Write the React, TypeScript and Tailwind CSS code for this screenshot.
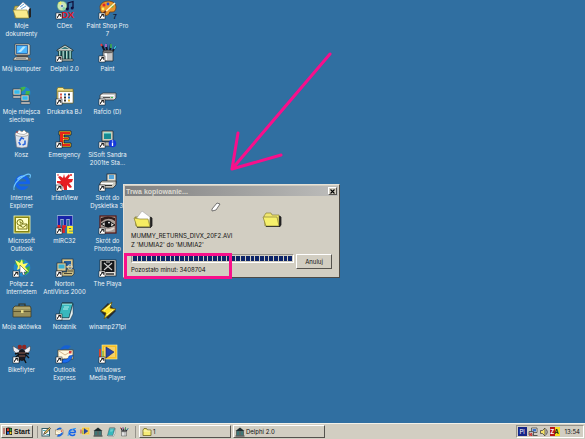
import React from "react";

type IconProps = { children: React.ReactNode; shortcut?: boolean };

function Art({ children, shortcut }: IconProps) {
  return (
    <svg viewBox="0 0 20 20" className="h-5 w-5 shrink-0" aria-hidden="true">
      {children}
      {shortcut && (
        <g>
          <rect x="1" y="13" width="6" height="6" fill="#fff" stroke="#111" strokeWidth="0.5" />
          <path d="M2.4 17.8 Q2.6 15.4 4.6 15.2 M3.4 14.4 H5.8 V16.8" fill="none" stroke="#000" strokeWidth="1" />
        </g>
      )}
    </svg>
  );
}

const Folder = () => (
  <>
    <path d="M2 8 L3 6 H8 L9 8 H16 V18 H3 Z" fill="#c9b95a" stroke="#77702c" strokeWidth="0.6" />
    <path d="M4 9 L11 2 L18 8 L14 14 L5 14 Z" fill="#fff" stroke="#778" strokeWidth="0.5" />
    <path d="M8 7 L12 4 M9 9 L14 6" stroke="#5a9ad0" strokeWidth="0.9" />
    <path d="M1 10 H15 L17 18 H4 Z" fill="#f8ea8c" stroke="#8c8030" strokeWidth="0.6" />
    <path d="M17 9 L19 8 V17 L17 18 Z" fill="#222" />
  </>
);

const Computer = () => (
  <>
    <path d="M3 1 H17 L18 2 V12 H3 Z" fill="#d8d4c4" stroke="#333" strokeWidth="0.6" />
    <rect x="4.5" y="2.5" width="11" height="8" fill="#49b6ff" stroke="#124a90" strokeWidth="0.7" />
    <path d="M6 9 L11 3.5 H14 L9 9 Z" fill="#b4e6ff" />
    <rect x="5" y="12" width="11" height="2" fill="#555" />
    <path d="M3 14 H16 L18 17 H1 Z" fill="#ddd8c8" stroke="#333" strokeWidth="0.6" />
    <path d="M4 15.5 H14" stroke="#888" strokeWidth="0.8" />
    <rect x="16" y="15" width="3" height="3" fill="#666" />
  </>
);

const Network = () => (
  <>
    <circle cx="12" cy="7" r="6.5" fill="#2184c8" />
    <path d="M7 3 Q10 0 14 1 L12 4 L9 6 L6 6 Z M14 5 L18 5 L17 10 L13 10 Z" fill="#43b54a" />
    <rect x="1" y="3" width="8" height="6" fill="#d8d8cc" stroke="#333" strokeWidth="0.6" />
    <rect x="2.3" y="4.2" width="5.4" height="3.6" fill="#35b9ed" />
    <rect x="1" y="10" width="8" height="2" fill="#ccc" stroke="#333" strokeWidth="0.4" />
    <rect x="9" y="9" width="8" height="6" fill="#d8d8cc" stroke="#333" strokeWidth="0.6" />
    <rect x="10.3" y="10.2" width="5.4" height="3.6" fill="#35b9ed" />
    <rect x="9" y="16" width="9" height="2" fill="#ccc" stroke="#333" strokeWidth="0.4" />
  </>
);

const Bin = () => (
  <>
    <path d="M3 5 H17 L15.5 18 Q10 20 4.5 18 Z" fill="#dbe3ec" stroke="#667" strokeWidth="0.6" />
    <ellipse cx="10" cy="5" rx="7" ry="2.4" fill="#f6f6f6" stroke="#777" strokeWidth="0.6" />
    <path d="M5 4 L7 1 L10 3 L12 1 L15 4 L12 5.5 L8 5 Z" fill="#fff" stroke="#888" strokeWidth="0.6" />
    <path d="M7.5 12 L9.5 8.8 L12 10 M13 11.5 L13 15 L10.5 16 M8.5 16 L6.8 13" fill="none" stroke="#2b66dc" strokeWidth="1.6" />
    <circle cx="5" cy="3" r="0.8" fill="#c33" />
  </>
);

const Explorer = () => (
  <>
    <circle cx="10.2" cy="10.5" r="5.8" fill="none" stroke="#1463e8" strokeWidth="3.4" />
    <path d="M12 12 H19 V14.4 H12 Z" fill="#306fa1" />
    <path d="M5 10.8 H17.8" stroke="#1463e8" strokeWidth="2.6" />
    <path d="M5.4 7.4 Q8 3.6 12.5 4.2" fill="none" stroke="#79c4ff" strokeWidth="1.2" />
    <path d="M2 18 Q1 13 7 7.5 Q15 1 18 2.4 Q19 3.6 17.8 6" fill="none" stroke="#6cc6ff" strokeWidth="1.1" />
  </>
);

const Outlook = () => (
  <>
    <rect x="2" y="1" width="16" height="17" fill="#858513" stroke="#ffffb0" strokeWidth="0.8" />
    <rect x="4" y="3" width="12" height="13" fill="#ffffc4" />
    <circle cx="8" cy="7.5" r="3" fill="#ffffb0" stroke="#6d6d10" />
    <path d="M8 5.6 V7.6 H9.8" fill="none" stroke="#6d6d10" strokeWidth="0.8" />
    <path d="M8 9 H15 V14 H6 V11 M7 10 L11 12.5 L15 9.5" fill="#fff9a8" stroke="#6d6d10" strokeWidth="0.9" />
  </>
);

const Connect = () => (
  <>
    <circle cx="10" cy="10" r="8.4" fill="#2489cf" />
    <path d="M3 5 Q8 0 13 3 L10 6 L11 9 L6 9 Z M13 10 L18 8 L17 14 L13 17 Z" fill="#41b03f" />
    <path d="M3 2 L8 5 L10 1 L11 6 L16 5 L13 9 L17 14 L9 10 L5 12 L6 8 Z" fill="#ffff67" />
    <path d="M8 7 L15 14 L12 14 L13 17 L11 17 L10 14 L8 15 Z" fill="#fff" stroke="#333" strokeWidth="0.5" />
  </>
);

const Briefcase = () => (
  <>
    <path d="M7 6 V3 H13 V6" fill="none" stroke="#39351e" strokeWidth="1.2" />
    <path d="M1 7 L3 5 H18 L19 7 V16 H1 Z" fill="#99905a" stroke="#37341f" strokeWidth="0.7" />
    <path d="M1 10.5 H19" stroke="#5b552f" />
    <path d="M2 7 H18" stroke="#c8bf84" />
    <rect x="9" y="9" width="2.5" height="3" fill="#e7db85" />
  </>
);

const Fly = () => (
  <>
    <path d="M9 7 L1 2 Q0 7 5 10 Z M11 7 L18 2 Q20 7 14 10 Z" fill="#eeeef4" stroke="#333" strokeWidth="0.5" />
    <ellipse cx="10" cy="11" rx="4" ry="6" fill="#191920" />
    <circle cx="7.8" cy="3" r="2.2" fill="#8f2721" />
    <circle cx="12.2" cy="3" r="2.2" fill="#8f2721" />
    <path d="M7 10 L3 14 M13 10 L17 14 M8 15 L6 19 M12 15 L14 19 M6 9 L3 10 M14 9 L17 10" stroke="#111" strokeWidth="1.4" />
    <path d="M7 9 H13 M7 12 H13" stroke="#8d5c4d" />
  </>
);

const CDex = () => (
  <>
    <circle cx="7" cy="6" r="4.8" fill="#c9e7b4" stroke="#596" strokeWidth="0.5" />
    <path d="M7 6 L3 3 L6 1.3 Z" fill="#f4ec6a" />
    <path d="M7 6 L11 8 L8 10.7 Z" fill="#82d4ae" />
    <circle cx="7" cy="6" r="1.5" fill="#39699b" stroke="#fff" strokeWidth="0.6" />
    <path d="M13 9 V3 L18 1.5 V8" fill="none" stroke="#10103c" strokeWidth="1.3" />
    <circle cx="12.3" cy="9" r="1.5" fill="#10103c" />
    <circle cx="17.2" cy="8" r="1.5" fill="#10103c" />
    <text x="6.5" y="18" fill="#e01622" className="font-['Liberation_Sans'] text-[9px] font-bold">DX</text>
  </>
);

const Temple = () => (
  <>
    <path d="M2 7 L10 2 L18 7 V8 H2 Z" fill="#c9cfc9" stroke="#162828" strokeWidth="0.8" />
    <path d="M6 6 L10 3.8 L14 6 Z" fill="#36797a" />
    <rect x="3" y="8" width="14" height="8" fill="#123d42" />
    <path d="M4.8 8 V16 M8.5 8 V16 M12 8 V16 M15.4 8 V16" stroke="#61aaa0" strokeWidth="1.6" />
    <path d="M4.4 8 V16 M8 8 V16 M11.5 8 V16 M15 8 V16" stroke="#dff0e4" strokeWidth="0.7" />
    <path d="M2 16 H18 V18 H1 Z" fill="#afb7b2" stroke="#192929" strokeWidth="0.6" />
  </>
);

const SmallTemple = () => (
  <>
    <path d="M1 8 L10 1 L19 8 Z" fill="#1c2b2e" />
    <path d="M4 8 V17 M8 8 V17 M12 8 V17 M16 8 V17" stroke="#173033" strokeWidth="2.6" />
    <path d="M6 9 V16 M14 9 V16" stroke="#22878a" strokeWidth="2" />
    <path d="M1 18 H19" stroke="#1c2b2e" strokeWidth="2" />
  </>
);

const Programs = () => (
  <>
    <path d="M2 3 L3 1.5 H8 L9 3 H18 V17 H2 Z" fill="#f7e58b" stroke="#796b20" strokeWidth="0.7" />
    <rect x="3" y="5" width="15" height="12" fill="#fff" stroke="#776d39" strokeWidth="0.6" />
    <path d="M3 5.5 H18" stroke="#a39851" />
    <path d="M5 8.5 H7 M5 11.5 H7" stroke="#d25346" strokeWidth="2" />
    <path d="M9 8.5 H11 M13 11.5 H15" stroke="#2370bb" strokeWidth="2" />
    <path d="M13 8.5 H15 M9 11.5 H11 M9 14.5 H11" stroke="#333" strokeWidth="2" />
    <path d="M13 14.5 H15" stroke="#e9b52e" strokeWidth="2" />
  </>
);

const Emergency = () => (
  <>
    <path d="M4 2 H16 V6 H9 V8 H14 V11 H9 V14 H16 V18 H4 V14 H5 V6 H4 Z" fill="#ffc72f" stroke="#111" strokeWidth="0.7" />
    <path d="M5 3 H15 V5 H8 V9 H13 V10 H8 V15 H15 V17 H5 Z" fill="#e72518" />
  </>
);

const Irfan = () => (
  <>
    <rect x="1" y="1" width="18" height="17" fill="#fff" />
    <path d="M9 2 L10 6 L14 2 L15 4 L13 7 L18 7 L17 10 L14 11 L17 15 L15 16 L12 13 L12 18 H9 L8 14 L4 16 L6 12 L2 11 V9 L6 9 L3 5 L5 4 L8 6 Z" fill="#e61e22" />
    <circle cx="16" cy="3" r="1" fill="#e61e22" />
    <circle cx="3" cy="3" r="0.8" fill="#e61e22" />
  </>
);

const Mirc = () => (
  <>
    <path d="M4 10.5 V2.5 H16 V10.5 M10 2.5 V10.5" fill="none" stroke="#e8ecf8" strokeWidth="3.8" />
    <path d="M4 10.5 V2.5 H16 V10.5 M10 2.5 V10.5" fill="none" stroke="#1724a9" strokeWidth="3" />
    <path d="M8.5 18 V11.5 H11" fill="none" stroke="#e42024" strokeWidth="2.6" />
    <path d="M4 10 V13" stroke="#e42024" strokeWidth="3" />
    <path d="M18 17.5 H13 V12 H17 V14.8 H13" fill="none" stroke="#ffee28" strokeWidth="1.8" />
  </>
);

const Norton = () => (
  <>
    <rect x="7" y="1" width="11" height="9" fill="#d4c894" stroke="#222" strokeWidth="0.6" />
    <rect x="9" y="3" width="7" height="5" fill="#245d9c" />
    <rect x="2" y="5" width="9" height="8" fill="#d8ce9f" stroke="#222" strokeWidth="0.6" />
    <rect x="3.5" y="6.5" width="6" height="4" fill="#39aed3" />
    <path d="M4 14 H12 V11 H19 V16 L17 18 H4 Z" fill="#c8bc85" stroke="#222" strokeWidth="0.6" />
    <path d="M9 15.5 H17 M13 13 H18" stroke="#4b4733" />
    <circle cx="15" cy="9" r="2.2" fill="none" stroke="#e2e0cf" />
  </>
);

const Notepad = () => (
  <>
    <path d="M7 2 H18 L14 17 H3 Z" fill="#38b8bd" stroke="#123e46" strokeWidth="0.8" />
    <path d="M14 17 L18 3 V13 L15 19 H5 L3 17 Z" fill="#e8f5f4" stroke="#234" strokeWidth="0.5" />
    <path d="M7 3 H17 M9 6 H14 M8 8 H13" stroke="#b5f1ed" />
    <path d="M8 1 V3 M10 1 V3 M12 1 V3 M14 1 V3 M16 1 V3" stroke="#222" strokeWidth="0.7" />
  </>
);

const Express = () => (
  <>
    <path d="M4 7 Q8 -1 16 2 L13 5 Q8 3 7 8 Z" fill="#1560d4" />
    <rect x="3" y="6" width="15" height="9" fill="#fff8df" stroke="#57431d" strokeWidth="0.7" />
    <path d="M4 7 L10 11 L17 7" fill="none" stroke="#d4b58e" />
    <rect x="14" y="7" width="2.5" height="2.5" fill="#d33b3b" />
    <path d="M18 11 Q15 21 6 18.5 L9 15 Q13 16 14 12 Z" fill="#1a6cf0" stroke="#083c94" strokeWidth="0.5" />
  </>
);

const Palette = () => (
  <>
    <path d="M2 6 Q4 1 11 1 Q18 2 18 7 Q18 12 14 12 Q11 11 11 14 Q9 17 5 14 Q1 11 2 6 Z" fill="#e8962c" stroke="#693711" strokeWidth="0.7" />
    <circle cx="6" cy="5" r="1.5" fill="#e5272b" />
    <circle cx="10" cy="4" r="1.4" fill="#284bdb" />
    <circle cx="14" cy="6" r="1.5" fill="#3eb444" />
    <circle cx="5" cy="9" r="1.4" fill="#fff05e" />
    <path d="M5 14 L17 3" stroke="#fff5c8" strokeWidth="1.4" />
    <path d="M4 15 L8 11" stroke="#713219" strokeWidth="2" />
    <text x="15" y="19" fill="#121a35" className="font-['Liberation_Sans'] text-[7px] font-bold">7</text>
  </>
);

const Paint = () => (
  <>
    <path d="M7 9 L4 2 M9 8 L8 1 M12 8 L13 1 M14 9 L18 3" stroke="#151525" strokeWidth="2" />
    <path d="M4 3 L3 1" stroke="#e63b3b" strokeWidth="2" />
    <path d="M8 4 V1" stroke="#cf7ee8" strokeWidth="1.5" />
    <path d="M13 5 V1" stroke="#4ad168" strokeWidth="1.4" />
    <path d="M16 6 L18 3" stroke="#33bbdd" strokeWidth="1.6" />
    <path d="M5 8 H15 V18 H5 Z" fill="#c5c5c5" stroke="#222" strokeWidth="0.7" />
    <path d="M8 10 V17" stroke="#fff" strokeWidth="2" />
    <ellipse cx="10" cy="8.5" rx="5" ry="1.4" fill="#777" stroke="#222" strokeWidth="0.5" />
  </>
);

const Drive = () => (
  <>
    <path d="M2 9 L5 7 H18 V12 L16 14 H2 Z" fill="#c8c8c8" stroke="#333" strokeWidth="0.7" />
    <path d="M3 9.5 H16 V13" fill="none" stroke="#fff" />
    <path d="M5 11.5 H12" stroke="#555" />
    <rect x="13" y="11" width="2" height="1" fill="#39c44b" />
  </>
);

const Sandra = () => (
  <>
    <path d="M4 2 H15 V12 H4 Z" fill="#c9cdbd" stroke="#222" strokeWidth="0.7" />
    <rect x="6" y="4" width="7" height="6" fill="#168b92" />
    <path d="M6 4 H13" stroke="#8df0e4" />
    <path d="M4 13 H14 L16 17 H3 Z" fill="#bdbdb0" stroke="#222" strokeWidth="0.6" />
    <circle cx="14.5" cy="14.5" r="3.8" fill="#1538dc" />
    <path d="M14.5 13.5 V17 M14.5 11.5 V12.5" stroke="#fff" strokeWidth="1.3" />
  </>
);

const Floppy = () => (
  <>
    <rect x="9" y="2" width="9" height="9" fill="#dedfd5" stroke="#222" strokeWidth="0.7" />
    <rect x="11" y="3" width="5" height="4" fill="#55a5dc" />
    <path d="M2 11 L4 9 H18 V13 L15 16 H2 Z" fill="#c9c9c0" stroke="#222" strokeWidth="0.7" />
    <path d="M3 11.5 H15" stroke="#fff" />
    <path d="M7 13.5 H14" stroke="#333" />
  </>
);

const Eye = () => (
  <>
    <rect x="2" y="1" width="16" height="17" fill="#a99d97" stroke="#5b1712" strokeWidth="1.2" />
    <path d="M3 7 Q10 1 17 6 V3 Q10 0 3 3 Z" fill="#301c1b" />
    <path d="M3 9 Q10 4 17 10 Q10 14 3 9 Z" fill="#e8e4e2" stroke="#111" />
    <circle cx="10" cy="9" r="3.4" fill="#141416" />
    <circle cx="11" cy="7.6" r="0.9" fill="#fff" />
    <path d="M8 15 Q12 16 16 13" stroke="#e4d8d2" strokeWidth="2" fill="none" />
  </>
);

const Playa = () => (
  <>
    <rect x="2" y="2" width="16" height="16" fill="#e4e2dc" stroke="#111" strokeWidth="0.6" />
    <rect x="3.5" y="3" width="13" height="11" fill="#15171a" />
    <path d="M6 5 L14 12 M14 5 L6 12 M8 4 H12" stroke="#cfcfcf" strokeWidth="1.1" />
    <path d="M8 16 H16" stroke="#222" strokeWidth="1.4" />
  </>
);

const Winamp = () => (
  <>
    <path d="M10 2 L18 10 L10 18 L2 10 Z" fill="#252a30" />
    <path d="M14 1 L3 10 L8 12 L6 18 L18 8 L12 7 Z" fill="#ffe32a" stroke="#5b4b0b" strokeWidth="0.7" />
    <path d="M13 3 L6 9.5 M15 9 L9 14" stroke="#fff9a6" />
  </>
);

const Media = () => (
  <>
    <rect x="4" y="1" width="15" height="14" fill="#f7be24" stroke="#fff3a0" strokeWidth="0.6" />
    <rect x="6" y="3" width="11" height="10" fill="#f4d16a" />
    <path d="M8 3 L16 8 L8 14 Z" fill="#2546a7" stroke="#172969" strokeWidth="0.6" />
    <path d="M2 5 V13" stroke="#d6432c" strokeWidth="2" />
    <path d="M5 7 V14" stroke="#58b74d" />
  </>
);

const OpenFolder = () => (
  <>
    <path d="M2 7 L4 4 H9 L10 6 H17 V17 H3 Z" fill="#f0e670" stroke="#8b8338" strokeWidth="0.7" />
    <path d="M1 8 H15 L17 17 H4 Z" fill="#f6f06c" stroke="#8a8234" strokeWidth="0.7" />
    <path d="M17.5 7 L19 8 V16 L17.5 18 Z M4 17.5 H18" fill="#222" stroke="#222" strokeWidth="0.8" />
  </>
);

const SourceFolder = () => (
  <>
    <path d="M2 8 H17 V17 H3 Z" fill="#d9ce56" stroke="#777027" strokeWidth="0.7" />
    <path d="M3 10 L9 2 L17 8 L16 14 H5 Z" fill="#fff" stroke="#999" strokeWidth="0.5" />
    <path d="M1 9 L7 10 H15 L17 18 H4 Z" fill="#f6ec62" stroke="#8a8234" strokeWidth="0.7" />
    <path d="M17.5 8 L19 9 V17 L17.5 18.5 Z M4 18.3 H18" fill="#222" stroke="#222" strokeWidth="0.8" />
  </>
);

const TaskFolder = () => (
  <>
    <path d="M2 6 L4 3 H9 L11 6 H18 V17 H2 Z" fill="#f6ec78" stroke="#6e6620" strokeWidth="1.6" />
    <path d="M3 8 H17" stroke="#fffbd0" strokeWidth="1.6" />
  </>
);

type Shortcut = { lines: string[]; icon: React.FC; shortcut?: boolean };

const shortcuts: Shortcut[] = [
  { lines: ["Moje", "dokumenty"], icon: Folder },
  { lines: ["Mój komputer"], icon: Computer },
  { lines: ["Moje miejsca", "sieciowe"], icon: Network },
  { lines: ["Kosz"], icon: Bin },
  { lines: ["Internet", "Explorer"], icon: Explorer },
  { lines: ["Microsoft", "Outlook"], icon: Outlook },
  { lines: ["Połącz z", "Internetem"], icon: Connect, shortcut: true },
  { lines: ["Moja aktówka"], icon: Briefcase },
  { lines: ["Bikeflyter"], icon: Fly, shortcut: true },
  { lines: ["CDex"], icon: CDex, shortcut: true },
  { lines: ["Delphi 2.0"], icon: Temple, shortcut: true },
  { lines: ["Drukarka BJ"], icon: Programs, shortcut: true },
  { lines: ["Emergency"], icon: Emergency, shortcut: true },
  { lines: ["IrfanView"], icon: Irfan, shortcut: true },
  { lines: ["mIRC32"], icon: Mirc, shortcut: true },
  { lines: ["Norton", "AntiVirus 2000"], icon: Norton, shortcut: true },
  { lines: ["Notatnik"], icon: Notepad, shortcut: true },
  { lines: ["Outlook", "Express"], icon: Express, shortcut: true },
  { lines: ["Paint Shop Pro", "7"], icon: Palette, shortcut: true },
  { lines: ["Paint"], icon: Paint, shortcut: true },
  { lines: ["Rafcio (D)"], icon: Drive, shortcut: true },
  { lines: ["SiSoft Sandra", "2001te Sta..."], icon: Sandra, shortcut: true },
  { lines: ["Skrót do", "Dyskietka 3."], icon: Floppy, shortcut: true },
  { lines: ["Skrót do", "Photoshp"], icon: Eye, shortcut: true },
  { lines: ["The Playa"], icon: Playa, shortcut: true },
  { lines: ["winamp271pl"], icon: Winamp },
  { lines: ["Windows", "Media Player"], icon: Media, shortcut: true },
];

const raised = "border border-t-white border-l-white border-r-[#55534e] border-b-[#55534e] bg-[#d2cec2]";

function CopyDialog() {
  return (
    <section
      aria-label="Trwa kopiowanie"
      className="absolute top-[184px] left-[123px] w-[217px] border border-t-[#e4e1d8] border-l-[#e4e1d8] border-r-[#4c4a46] border-b-[#4c4a46] bg-[#d2cec2] p-px text-[6px] leading-[9px] text-[#111]"
    >
      <header className="flex h-[10px] items-center justify-between bg-linear-to-r from-[#808080] to-[#bdbdbb] px-px">
        <h1 className="font-['Liberation_Sans',Arial,sans-serif] text-[7px] leading-[9px] font-bold text-[#dcdad2]">Trwa kopiowanie...</h1>
        <button type="button" aria-label="Zamknij" className={`flex h-2 w-[9px] items-center justify-center ${raised}`}>
          <svg viewBox="0 0 5 5" className="h-[5px] w-[5px]">
            <path d="M0.5 0.5 L4.5 4.5 M4.5 0.5 L0.5 4.5" stroke="#000" strokeWidth="1.1" />
          </svg>
        </button>
      </header>
      <div className="px-1.5 pt-1 pb-0.5">
        <div className="flex h-[31px] justify-between pr-[50px] pl-0.5">
          <div className="flex items-end pb-0.5"><Art><SourceFolder /></Art></div>
          <svg viewBox="0 0 10 10" className="mt-0.5 ml-4 h-2.5 w-2.5" aria-hidden="true">
            <path d="M1 7 L6 1 L9 2 L5 8 L1 9 Z" fill="#fff" stroke="#555" strokeWidth="0.8" />
          </svg>
          <div className="flex items-end pb-0.5"><Art><OpenFolder /></Art></div>
        </div>
        <p className="whitespace-nowrap">MUMMY_RETURNS_DIVX_20F2.AVI</p>
        <p>Z 'MUMIA2' do 'MUMIA2'</p>
        <div className="mt-[5px] flex justify-between">
          <div className="w-[163px]">
            <div
              role="progressbar"
              aria-label="Postęp kopiowania"
              className="flex h-[9px] gap-px border border-t-[#96938b] border-l-[#96938b] border-r-white border-b-white p-px"
            >
              {Array.from({ length: 34 }, (_, i) => (
                <span key={i} className="flex-1 bg-[#0c2468]" />
              ))}
            </div>
            <p className="mt-0.5">Pozostało minut: 3408704</p>
          </div>
          <button type="button" className={`h-[15px] w-9 ${raised}`}>Anuluj</button>
        </div>
      </div>
    </section>
  );
}

function Small({ children }: { children: React.ReactNode }) {
  return <svg viewBox="0 0 20 20" className="h-2.5 w-2.5 shrink-0" aria-hidden="true">{children}</svg>;
}

const DesktopPad = () => (
  <>
    <rect x="2" y="3" width="15" height="15" fill="#fff" stroke="#315d68" strokeWidth="2" />
    <path d="M5 15 L8 9 L17 1 L19 3 L11 12 Z" fill="#e1bf56" stroke="#222" strokeWidth="1.3" />
    <path d="M4 7 H9 M11 15 H16" stroke="#4aaab0" strokeWidth="2" />
  </>
);

const SmallExplorer = () => (
  <>
    <path d="M17 11 H4.5 Q5 17 11 17 Q14 17 16 14.5 M4.5 11 Q5 5 11 5 Q16.5 5 17 11" fill="none" stroke="#1463e8" strokeWidth="3" />
    <path d="M2 18 Q1 13 8 7 Q15 1 18 3" fill="none" stroke="#3f9ff0" strokeWidth="2" />
  </>
);

const quick: { name: string; icon: React.FC }[] = [
  { name: "Pokaż pulpit", icon: DesktopPad },
  { name: "Outlook Express", icon: Express },
  { name: "Internet Explorer", icon: SmallExplorer },
  { name: "Windows Media Player", icon: Media },
  { name: "Delphi 2.0", icon: SmallTemple },
  { name: "Notatnik", icon: Notepad },
  { name: "Paint", icon: Paint },
];

function Taskbar() {
  return (
    <footer className="flex h-4 items-center border-t border-[#f2f0e8] bg-[#d2cec2] px-px text-[6px] leading-[9px] text-[#111]">
      <button type="button" className={`flex h-[13px] w-8 items-center gap-px px-px font-['Liberation_Sans',Arial,sans-serif] text-[7px] font-bold ${raised}`}>
        <svg viewBox="0 0 10 9" className="h-[9px] w-2.5 shrink-0" aria-hidden="true">
          <path d="M3 1 Q5 0 9 1 V8 Q6 7 3 8 Z" fill="#111" />
          <path d="M4 1.5 H6 V4 H4 Z" fill="#e83525" />
          <path d="M6.6 1.5 H8.5 V4 H6.6 Z" fill="#35a640" />
          <path d="M4 4.7 H6 V7 H4 Z" fill="#245fd8" />
          <path d="M6.6 4.7 H8.5 V7 H6.6 Z" fill="#f3d32a" />
          <path d="M0 2 H2 M0 4 H2 M0 6 H2" stroke="#a32a2a" />
        </svg>
        Start
      </button>
      <span className="ml-1 h-3 w-px bg-[#96938b]" />
      <nav aria-label="Szybkie uruchamianie" className="ml-[3px] flex gap-[3px]">
        {quick.map(({ name, icon: Icon }) => (
          <button key={name} type="button" aria-label={name}><Small><Icon /></Small></button>
        ))}
      </nav>
      <span className="ml-1.5 h-3 w-px bg-[#96938b]" />
      <div className="ml-[3px] flex min-w-0 flex-1 gap-0.5">
        <button type="button" className={`flex h-[13px] w-[92px] items-center gap-px px-0.5 ${raised}`}>
          <Small><TaskFolder /></Small>1
        </button>
        <button type="button" className={`flex h-[13px] w-[92px] items-center gap-px px-px ${raised}`}>
          <Small><SmallTemple /></Small>Delphi 2.0
        </button>
      </div>
      <div className="flex h-[13px] items-center gap-px border border-t-[#96938b] border-l-[#96938b] border-r-white border-b-white pr-[3px] pl-px">
        <span className="flex h-[9px] w-[9px] items-center justify-center bg-[#152486] text-white">Pl</span>
        <Small>
          <path d="M7 2 H18 V11 H7 Z" fill="#eee" stroke="#333" strokeWidth="1.4" />
          <rect x="9" y="4" width="7" height="5" fill="#3b73c9" />
          <path d="M2 9 H11 V16 H2 Z" fill="#bbb" stroke="#333" strokeWidth="1.4" />
          <path d="M3 12 L8 18 M8 12 L3 18" stroke="#d22" strokeWidth="2" />
          <path d="M10 17 H19" stroke="#555" strokeWidth="2" />
        </Small>
        <Small>
          <path d="M3 7 H7 L12 2 V18 L7 13 H3 Z" fill="#f6e36a" stroke="#333" strokeWidth="1.4" />
          <path d="M15 5 Q18 10 15 15" fill="none" stroke="#333" strokeWidth="1.6" />
        </Small>
        <span className="flex h-[9px] w-2.5 items-center justify-center bg-linear-to-r from-[#b81818] from-50% to-[#f6df25] to-50% font-bold">
          <span className="text-white">Z</span><span>A</span>
        </span>
        <time className="ml-1">13:54</time>
      </div>
    </footer>
  );
}

export default function App() {
  return (
    <div className="flex min-h-screen flex-col overflow-hidden bg-[#306fa1] font-['Inter','Liberation_Sans',Arial,sans-serif]">
      <main className="relative flex-1">
        <ul className="grid w-max auto-cols-[43px] grid-flow-col grid-rows-[repeat(9,43px)]">
          {shortcuts.map(({ lines, icon: Icon, shortcut }) => (
            <li key={lines.join(" ")} className="flex flex-col items-center gap-0.5">
              <Art shortcut={shortcut}><Icon /></Art>
              <span className="text-center text-[6px] leading-[8px] whitespace-nowrap text-[#eef3f7]">
                {lines.map((line) => (
                  <span key={line} className="block">{line}</span>
                ))}
              </span>
            </li>
          ))}
        </ul>
        <CopyDialog />
        <div className="absolute top-[253px] left-[124px] h-[26px] w-[108px] border-[3px] border-[#f80f8b]" />
        <svg viewBox="0 0 104 122" className="absolute top-[51px] left-[229px] h-[122px] w-[104px]" aria-hidden="true">
          <path d="M101 3 L3 118 M9 82 L3 118 L52 104" fill="none" stroke="#f80f8b" strokeWidth="3" strokeLinecap="round" strokeLinejoin="round" />
        </svg>
      </main>
      <Taskbar />
    </div>
  );
}
